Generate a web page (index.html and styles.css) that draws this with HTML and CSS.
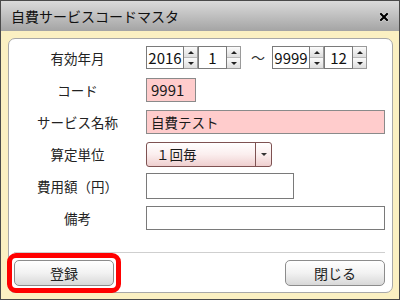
FILE: index.html
```html
<!DOCTYPE html>
<html lang="ja">
<head>
  <meta charset="UTF-8">
  <title>自費サービスコードマスタ</title>
  <link rel="stylesheet" href="styles.css">
</head>
<body>
  <div class="window">
    <div class="titlebar">
      <span class="title">自費サービスコードマスタ</span>
      <svg class="close" width="10" height="10" viewBox="0 0 10 10">
        <path d="M2 2 L8 8 M8 2 L2 8" stroke="#fff" stroke-width="3.6" stroke-linecap="square" opacity="0.6"/>
        <path d="M2 2 L8 8 M8 2 L2 8" stroke="#000" stroke-width="2.2" stroke-linecap="square"/>
      </svg>
    </div>

    <div class="body">
      <div class="panel">
        <div class="form">
          <div class="label">有効年月</div>
          <div class="field period">
            <div class="spin">
              <span class="num year">2016</span>
              <span class="arrows"><i class="up"></i><i class="down"></i></span>
            </div>
            <div class="spin">
              <span class="num month">1</span>
              <span class="arrows"><i class="up"></i><i class="down"></i></span>
            </div>
            <span class="tilde">～</span>
            <div class="spin">
              <span class="num year">9999</span>
              <span class="arrows"><i class="up"></i><i class="down"></i></span>
            </div>
            <div class="spin">
              <span class="num month">12</span>
              <span class="arrows"><i class="up"></i><i class="down"></i></span>
            </div>
          </div>

          <div class="label">コード</div>
          <div class="field">
            <span class="input required code">9991</span>
          </div>

          <div class="label">サービス名称</div>
          <div class="field">
            <span class="input required wide name">自費テスト</span>
          </div>

          <div class="label">算定単位</div>
          <div class="field">
            <div class="select">
              <span class="select-text">１回毎</span>
              <span class="select-arrow"><i></i></span>
            </div>
          </div>

          <div class="label">費用額（円）</div>
          <div class="field">
            <span class="input amount"></span>
          </div>

          <div class="label">備考</div>
          <div class="field">
            <span class="input wide"></span>
          </div>
        </div>

        <div class="footer">
          <div class="divider"></div>
          <div class="buttons">
            <button class="btn">登録</button>
            <button class="btn">閉じる</button>
          </div>
        </div>

        <!-- annotation around the register button -->
        <div class="highlight"></div>
      </div>
    </div>
  </div>
</body>
</html>
```

FILE: styles.css
```css
html, body {
  margin: 0;
  padding: 0;
}

body {
  width: 400px;
  height: 300px;
  font-family: "Noto Sans CJK JP", "Noto Sans", sans-serif;
  color: #1a1a1a;
}

.window {
  box-sizing: border-box;
  width: 400px;
  height: 300px;
  border: 1px solid #4a4a4a;
  display: flex;
  flex-direction: column;
}

.titlebar {
  height: 30px;
  display: flex;
  align-items: center;
  justify-content: space-between;
  padding: 0 10px 0 10px;
  background: linear-gradient(#dadada, #c2c2c2 45%, #a4a4a4);
}

.title {
  font-size: 14px;
  line-height: 1;
  color: #111;
}

.close {
  display: block;
  margin-top: 1px;
}

.body {
  flex: 1;
  background: #fbf0c2;
  padding: 7px 6px 6px 7px;
}

.panel {
  position: relative;
  box-sizing: border-box;
  height: 255px;
  background: #fff;
  border: 1px solid #a8a8a8;
  border-radius: 7px;
  padding: 7px 7px 0 0;
}

.form {
  display: grid;
  grid-template-columns: 137px 1fr;
  grid-auto-rows: 24px;
  row-gap: 8px;
}

.label {
  font-size: 13.5px;
  text-align: center;
  line-height: 24px;
  color: #222;
}

.field {
  display: flex;
  align-items: center;
}

.period {
  align-items: flex-start;
}

.spin {
  display: flex;
  height: 23px;
}

.num {
  box-sizing: border-box;
  border: 1px solid #7a7a7a;
  font-size: 15px;
  line-height: 21px;
  text-align: center;
  color: #111;
}

.num.year {
  width: 38px;
}

.num.month {
  width: 29px;
}

.arrows {
  box-sizing: border-box;
  width: 14px;
  display: flex;
  flex-direction: column;
  border: 1px solid #9a9a9a;
  border-left: 0;
}

.arrows i {
  flex: 1;
  position: relative;
  background: linear-gradient(#fbfbfb, #dedede);
}

.arrows i + i {
  border-top: 1px solid #b8b8b8;
}

.arrows i::after {
  content: "";
  position: absolute;
  left: 4px;
  top: 4px;
  border-left: 3px solid transparent;
  border-right: 3px solid transparent;
}

.arrows .up::after {
  border-bottom: 3px solid #222;
}

.arrows .down::after {
  border-top: 3px solid #222;
}

.tilde {
  font-size: 14px;
  line-height: 22px;
  margin: 0 7px 0 10px;
  color: #333;
}

.input {
  box-sizing: border-box;
  display: block;
  height: 24px;
  border: 1px solid #7a7a7a;
  font-size: 14px;
  line-height: 22px;
  padding: 0 4px;
  background: #fff;
}

.input.required {
  background: #ffcccc;
  border-color: #8a8a8a;
}

.input.code {
  width: 50px;
  font-size: 15px;
}

.input.wide {
  width: 239px;
}

.input.name {
  font-size: 13.5px;
}

.input.amount {
  width: 148px;
  height: 26px;
}

.select {
  box-sizing: border-box;
  width: 126px;
  height: 25px;
  display: flex;
  border: 1px solid #7e5252;
  border-radius: 3px;
  background: linear-gradient(#ffffff, #fbeeee 50%, #efcfcf);
}

.select-text {
  flex: 1;
  font-size: 13.5px;
  line-height: 23px;
  padding-left: 9px;
}

.select-arrow {
  width: 15px;
  border-left: 1px solid #7e5252;
  display: flex;
  align-items: center;
  justify-content: center;
}

.select-arrow i {
  border-left: 3px solid transparent;
  border-right: 3px solid transparent;
  border-top: 3px solid #333;
}

.footer {
  margin-top: 22px;
  padding-left: 5px;
}

.divider {
  height: 1px;
  background: #cfcfcf;
}

.buttons {
  display: flex;
  justify-content: space-between;
  padding-top: 7px;
}

.btn {
  width: 100px;
  height: 26px;
  padding: 0;
  font-family: inherit;
  font-size: 14px;
  color: #222;
  border: 1px solid #8c8c8c;
  border-radius: 5px;
  background: linear-gradient(#ffffff, #f2f2f2 50%, #d8d8d8);
}

.highlight {
  position: absolute;
  left: -2px;
  top: 214px;
  box-sizing: border-box;
  width: 114px;
  height: 40px;
  border: 5px solid #ff0000;
  border-radius: 9px;
}
```
